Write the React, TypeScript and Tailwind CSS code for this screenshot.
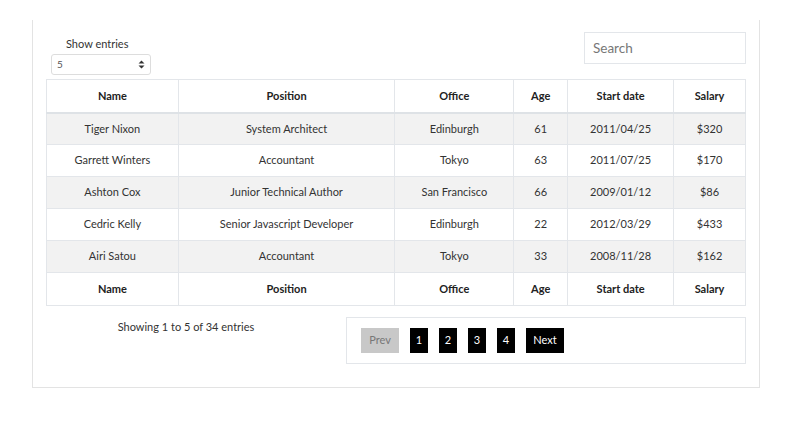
import React from 'react';

const rows = [
  ['Tiger Nixon', 'System Architect', 'Edinburgh', '61', '2011/04/25', '$320'],
  ['Garrett Winters', 'Accountant', 'Tokyo', '63', '2011/07/25', '$170'],
  ['Ashton Cox', 'Junior Technical Author', 'San Francisco', '66', '2009/01/12', '$86'],
  ['Cedric Kelly', 'Senior Javascript Developer', 'Edinburgh', '22', '2012/03/29', '$433'],
  ['Airi Satou', 'Accountant', 'Tokyo', '33', '2008/11/28', '$162'],
];

const heads = ['Name', 'Position', 'Office', 'Age', 'Start date', 'Salary'];
const widths = ['w-[132px]', 'w-[217px]', 'w-[119px]', 'w-[54px]', 'w-[106px]', 'w-[72px]'];

export default function App() {
  return (
    <div
      className="w-[800px] h-[428px] bg-white text-[#333] text-[11px]"
      style={{ fontFamily: 'Lato, "Noto Sans", sans-serif' }}
    >
      <div className="ml-[32px] mt-[20px] w-[728px] h-[368px] border-x border-b border-[#e3e3e3] px-[13px]">
        {/* Top controls */}
        <div className="flex justify-between items-start pt-[12px] h-[59px]">
          <div className="flex flex-col items-start pl-[5px] pt-[4px]">
            <span className="ml-[15px] text-[11px] leading-[16px] text-[#333]">Show entries</span>
            <div className="mt-[2px] w-[100px] h-[21px] border border-[#ddd] rounded-[3px] flex items-center justify-between px-[5px] text-[10px] text-[#555]">
              <span>5</span>
              <svg width="7" height="9" viewBox="0 0 7 9">
                <path d="M3.5 0.5 L6.5 3.5 L0.5 3.5 Z M3.5 8.5 L6.5 5.5 L0.5 5.5 Z" fill="#333" />
              </svg>
            </div>
          </div>
          <div className="w-[162px] h-[32px] border border-[#e3e6ea] flex items-center px-[8px] text-[13.5px] text-[#777]">
            Search
          </div>
        </div>

        {/* Table */}
        <table className="w-[700px] border-collapse border border-[#e3e6ea] text-center">
          <thead>
            <tr className="h-[33px] border-b-2 border-[#dee2e6]">
              {heads.map((h, i) => (
                <th key={h} className={`${widths[i]} border-x border-[#e3e6ea] font-bold text-[#222] text-[11px]`}>
                  {h}
                </th>
              ))}
            </tr>
          </thead>
          <tbody>
            {rows.map((r, ri) => (
              <tr key={ri} className={`h-[32px] border-b border-[#e3e6ea] ${ri % 2 === 0 ? 'bg-[#f2f2f2]' : 'bg-white'}`}>
                {r.map((c, ci) => (
                  <td key={ci} className="border-x border-[#e3e6ea]">
                    {c}
                  </td>
                ))}
              </tr>
            ))}
          </tbody>
          <tfoot>
            <tr className="h-[33px]">
              {heads.map(h => (
                <th key={h} className="border-x border-[#e3e6ea] font-bold text-[#222] text-[11px]">
                  {h}
                </th>
              ))}
            </tr>
          </tfoot>
        </table>

        {/* Bottom controls */}
        <div className="flex mt-[11px]">
          <div className="w-[300px] text-center leading-[17px] pt-[1px] pr-[20px]">Showing 1 to 5 of 34 entries</div>
          <div className="w-[400px] h-[47px] border border-[#e3e6ea] flex items-center pl-[14px] gap-[11px] text-[11px]">
            <span className="w-[38px] h-[25px] bg-[#c8c8c8] text-[#777] flex items-center justify-center">Prev</span>
            {['1', '2', '3', '4'].map(n => (
              <span key={n} className="w-[18px] h-[25px] bg-black text-white flex items-center justify-center">
                {n}
              </span>
            ))}
            <span className="w-[38px] h-[25px] bg-black text-white flex items-center justify-center">Next</span>
          </div>
        </div>
      </div>
    </div>
  );
}
